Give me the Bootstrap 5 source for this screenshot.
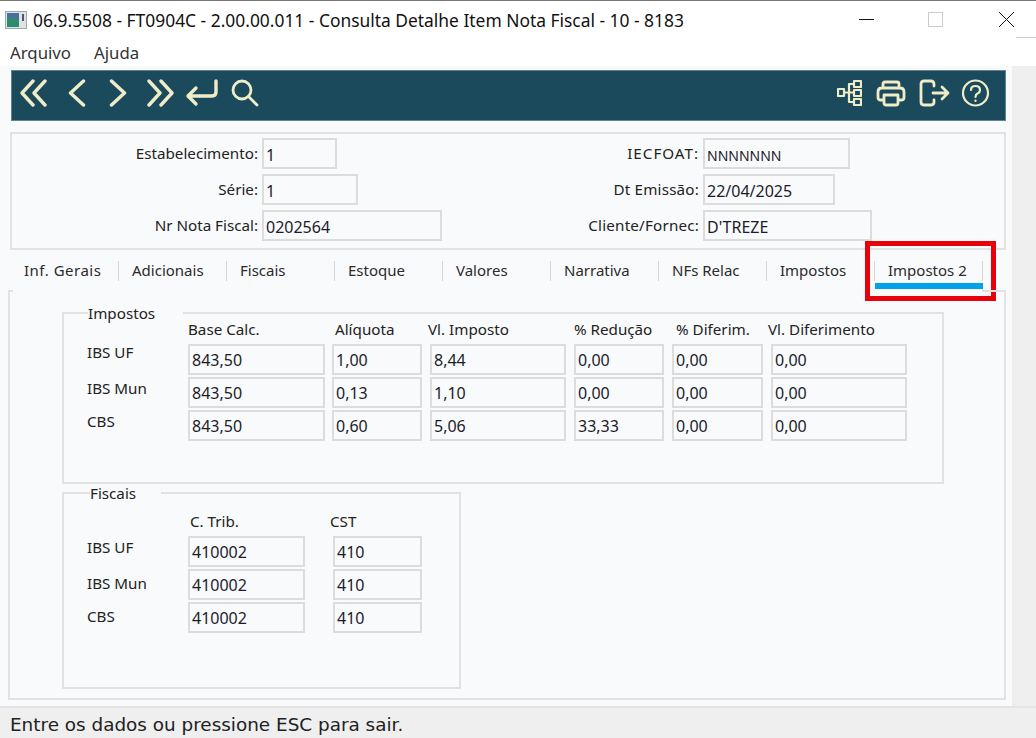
<!DOCTYPE html>
<html lang="pt-BR"><head><meta charset="utf-8"><title>Consulta Detalhe Item Nota Fiscal</title>
<link href="https://cdn.jsdelivr.net/npm/bootstrap@5.3.0/dist/css/bootstrap.min.css" rel="stylesheet">
<style>
html,body{margin:0;height:738px;overflow:hidden;background:#fff}
body{width:1036px;font-family:"Noto Sans","Liberation Sans",sans-serif;font-size:15.2px;color:#222;line-height:1.2}
.win{height:738px;border-top:1px solid #777}
.titlebar{height:37px;padding-left:5px;gap:6px;position:relative}
.titletxt{font-size:17.4px;color:#111;padding-top:2px;white-space:nowrap}
.winbtns{margin-left:auto;height:100%}
.winbtns svg{display:block}
.menubar{height:28px;padding:2px 10px 0;gap:23px;font-size:16.8px;color:#333}
.shell{height:640px}
.pane{width:1012px;background:#f9fafb;padding:4px 6px 0 8px;height:100%;flex:none}
.gutter{flex:1;background:#efefef}
.tool{height:51px;margin-left:3px;background:#1a4a5c;border:1px solid #5f8494;padding:0 15px 5px 7px}
.tool svg{fill:none;stroke:#f0ecc8;stroke-width:3.4;stroke-linecap:round;stroke-linejoin:round;display:block;flex:none}
.tool .sw2{stroke-width:2.2}
.tool .sw3{stroke-width:2.8}
.g21{margin-left:21px}.g23{margin-left:23px}.g20{margin-left:20px}.g10{margin-left:10px}.g12{margin-left:12px}.g14{margin-left:14px}.g13{margin-left:13px}.g11{margin-left:11px}
.hdr{height:118px;margin:11px 0 0 2px;border:2px solid #e2e2e2;padding-top:4px;position:relative}
.hgrid{display:grid;grid-template-columns:250px 380px 61px 1fr;grid-auto-rows:31px;row-gap:5px}
.hgrid .fld{padding-top:6px}
.lbl{text-align:right;padding-right:4px;padding-top:6px;white-space:nowrap}
.lblr{grid-column:3;margin-left:-120px;letter-spacing:.2px}
.capsw{letter-spacing:1px}
.fld{height:31px;border:2px solid #dcdcdc;background:#f9fafb;padding:5px 0 0 2px;line-height:19px;color:#1c1c2c;font-size:16px;white-space:nowrap;border-radius:0}
.nar{font-size:14px}
.w75{width:75px}.w96{width:96px}.w180{width:180px}.w147{width:147px}.w132{width:132px}.w169{width:169px}
.wide{margin-right:-1px}
.tabs{height:40px;margin-left:2px;padding-top:9px}
.tabitem{width:108px;height:24px;padding:2px 0 0 14px;position:relative;flex:none;color:#2b2b2b;font-size:15px}
.tabitem::after{content:"";position:absolute;right:-1px;top:2px;height:20px;border-right:1px solid #d6d6d6}
.tabfirst{letter-spacing:.5px}
.tabon::before{content:"";position:absolute;left:1px;right:-1px;top:24px;height:6px;background:#00a2e8}
.redbox{position:absolute;left:855px;top:-9px;width:131px;height:60px;border:5px solid #e8000a}
.tabcontent{height:410px;border:solid #e2e2e2;border-width:0 2px 2px 2px;position:relative}
.topcut{height:2px}
.cutl,.cutr{display:block;height:2px;background:#e2e2e2}
.cutl{width:3px}.cutr{width:22px}
.gb{border:2px solid #e2e2e2;margin-left:52px;position:relative}
.gb1{width:882px;height:172px;margin-top:20px}
.gb2{width:399px;height:197px;margin-top:8px}
.legendtxt{position:absolute;top:-10px;background:#f9fafb;line-height:18px;white-space:nowrap}
.leg1{left:24px;width:95px}
.leg2{left:26px;width:71px}
.ggrid{display:grid;row-gap:2px;padding-left:23px;grid-auto-rows:31px}
.ggrid1{grid-template-columns:93px 136px 90px 136px 90px 91px 136px;grid-template-rows:28px;column-gap:8px}
.ggrid2{grid-template-columns:101px 117px 28px 89px;grid-template-rows:40px}
.rowlbl{padding-top:3px;margin-top:-1px;white-space:nowrap}
.rowup{padding-top:0}
.rowdn{padding-top:6px}
.colhead{padding-top:6px;white-space:nowrap}
.hf{padding-top:18px}
.hp2{padding-left:2px}.hm3{margin-left:3px}.hm4{margin-left:4px}.hn2{margin-left:-2px}.hn3{margin-left:-3px}
.stat{height:32px;background:#efefef;border-top:2px solid #e4e4e4;padding:2px 0 0 10px;font-size:18.4px;font-family:"DejaVu Sans","Liberation Sans",sans-serif;color:#222;line-height:30px}
</style></head><body>
<div class="win">
<div class="titlebar d-flex align-items-center">
<svg width="22" height="18" viewBox="0 0 22 18"><rect x=".5" y=".5" width="21" height="17" fill="#dfe3e4" stroke="#9aa"/><rect x="2" y="2" width="12" height="14" fill="#2f8a72"/><rect x="2" y="2" width="12" height="5" fill="#4a6fa0"/><rect x="17" y="3" width="2" height="7" fill="#556"/></svg>
<span class="titletxt">06.9.5508 - FT0904C - 2.00.00.011 - Consulta Detalhe Item Nota Fiscal - 10 - 8183</span>
<div class="winbtns d-flex align-items-center">
<svg width="177" height="37" viewBox="0 0 177 37"><path d="M0 18.5H15" stroke="#111"/><rect x="69.5" y="11.5" width="14" height="14" fill="none" stroke="#ccc"/><path d="M140 11L155 26M155 11L140 26" stroke="#111" fill="none"/><path d="M157 36.5H177" stroke="#ccc"/></svg>
</div>
</div>
<div class="menubar d-flex align-items-center"><span>Arquivo</span><span>Ajuda</span></div>
<div class="shell d-flex">
<div class="pane">
<div class="tool d-flex align-items-center">
<svg width="28" height="28" viewBox="0 0 28 28"><path d="M14 2L3 14L14 26M26 2L15 14L26 26"/></svg>
<svg class="g21" width="18" height="28" viewBox="0 0 18 28"><path d="M15.500 2L2.500 14L15.500 26"/></svg>
<svg class="g23" width="18" height="28" viewBox="0 0 18 28"><path d="M2.500 2L15.500 14L2.500 26"/></svg>
<svg class="g20" width="28" height="28" viewBox="0 0 28 28"><path d="M2 2L13 14L2 26M14 2L25 14L14 26"/></svg>
<svg class="g10" width="34" height="28" viewBox="0 0 34 28"><path d="M31 2V13Q31 17 27 17H3M11 9L3 17L11 25"/></svg>
<svg class="g12 sw3" width="28" height="28" viewBox="0 0 28 28"><circle cx="11" cy="11" r="9"/><path d="M17.500 17.500L26 26"/></svg>
<svg class="ms-auto sw2" width="25" height="28" viewBox="0 0 25 28"><rect x="1" y="10" width="6" height="7"/><rect x="17" y="2" width="7" height="6"/><rect x="17" y="11" width="7" height="6"/><rect x="17" y="20" width="7" height="6"/><path d="M7 13.500H17M12 5V23M12 5H17M12 23H17"/></svg>
<svg class="g14 sw3" width="30" height="28" viewBox="0 0 30 28"><path d="M7 9V5Q7 3 9 3H21Q23 3 23 5V9M7 21H4Q2 21 2 18V13Q2 9 6 9H24Q28 9 28 13V18Q28 21 26 21H23"/><path d="M8 16H22V24Q22 26 20 26H10Q8 26 8 24Z"/></svg>
<svg class="g13 sw3" width="31" height="28" viewBox="0 0 31 28"><path d="M15 7V5Q15 2 12 2H5Q2 2 2 5V23Q2 26 5 26H12Q15 26 15 23V21M14 14H29M23 8L29 14L23 20"/></svg>
<svg class="g11 sw2" width="29" height="28" viewBox="0 0 29 28"><circle cx="14.500" cy="14" r="12.500"/><path d="M10 11Q10 7 14.500 7Q19 7 19 11Q19 13.500 16.500 14.500Q14.500 15.500 14.500 18"/><path d="M14.500 21.500V22"/></svg>
</div>
<div class="hdr">
<div class="hgrid">
<div class="lbl">Estabelecimento:</div><div><div class="fld w75">1</div></div><div class="lbl lblr capsw">IECFOAT:</div><div><div class="fld w147 nar">NNNNNNN</div></div>
<div class="lbl">Série:</div><div><div class="fld w96">1</div></div><div class="lbl lblr">Dt Emissão:</div><div><div class="fld w132">22/04/2025</div></div>
<div class="lbl">Nr Nota Fiscal:</div><div><div class="fld w180">0202564</div></div><div class="lbl lblr">Cliente/Fornec:</div><div><div class="fld w169">D'TREZE</div></div>
</div>
</div>
<div class="tabs d-flex position-relative">
<div class="tabitem tabfirst">Inf. Gerais</div><div class="tabitem">Adicionais</div><div class="tabitem">Fiscais</div><div class="tabitem">Estoque</div><div class="tabitem">Valores</div><div class="tabitem">Narrativa</div><div class="tabitem">NFs Relac</div><div class="tabitem">Impostos</div><div class="tabitem tabon">Impostos 2</div>
<div class="redbox"></div>
</div>
<div class="tabcontent">
<div class="topcut d-flex justify-content-between"><span class="cutl"></span><span class="cutr"></span></div>
<div class="gb gb1">
<div class="legendtxt leg1">Impostos</div>
<div class="ggrid ggrid1">
<div></div><div class="colhead">Base Calc.</div><div class="colhead hm3">Alíquota</div><div class="colhead hn2">Vl. Imposto</div><div class="colhead">% Redução</div><div class="colhead hm4">% Diferim.</div><div class="colhead hn3">Vl. Diferimento</div>
<div class="rowlbl rowup">IBS UF</div><div class="fld wide">843,50</div><div class="fld">1,00</div><div class="fld">8,44</div><div class="fld">0,00</div><div class="fld">0,00</div><div class="fld">0,00</div>
<div class="rowlbl">IBS Mun</div><div class="fld wide">843,50</div><div class="fld">0,13</div><div class="fld">1,10</div><div class="fld">0,00</div><div class="fld">0,00</div><div class="fld">0,00</div>
<div class="rowlbl">CBS</div><div class="fld wide">843,50</div><div class="fld">0,60</div><div class="fld">5,06</div><div class="fld">33,33</div><div class="fld">0,00</div><div class="fld">0,00</div>
</div>
</div>
<div class="gb gb2">
<div class="legendtxt leg2">Fiscais</div>
<div class="ggrid ggrid2">
<div></div><div class="colhead hf hp2">C. Trib.</div><div></div><div class="colhead hf hn3">CST</div>
<div class="rowlbl">IBS UF</div><div class="fld">410002</div><div></div><div class="fld">410</div>
<div class="rowlbl rowdn">IBS Mun</div><div class="fld">410002</div><div></div><div class="fld">410</div>
<div class="rowlbl rowdn">CBS</div><div class="fld">410002</div><div></div><div class="fld">410</div>
</div>
</div>
</div>
</div>
<div class="gutter"></div>
</div>
<div class="stat">Entre os dados ou pressione ESC para sair.</div>
</div>
</body></html>
